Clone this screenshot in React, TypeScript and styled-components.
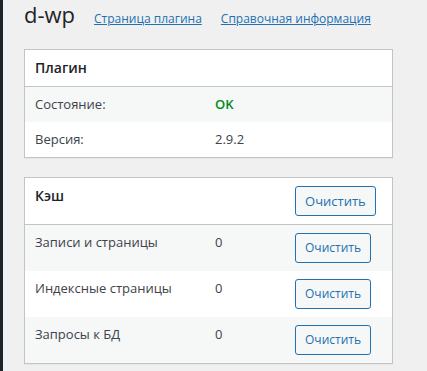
import styled, { createGlobalStyle } from 'styled-components';

const GlobalStyle = createGlobalStyle`
  html, body {
    margin: 0;
    padding: 0;
    background: #f0f0f1;
  }
  body {
    font-family: "Open Sans", "Noto Sans", sans-serif;
    font-size: 13px;
    color: #3c434a;
  }
`;

const Screen = styled.div`
  display: flex;
  min-height: 371px;
`;

const MenuEdge = styled.div`
  width: 3px;
  flex: none;
  background: #1d2327;
`;

const Wrap = styled.div`
  padding: 0 0 0 21px;
`;

const TitleBar = styled.div`
  display: flex;
  align-items: baseline;
  gap: 19px;
  height: 30px;
  margin-top: -1px;
  margin-bottom: 20px;
`;

const Title = styled.h1`
  margin: 0;
  font-size: 22px;
  font-weight: 400;
  line-height: 30px;
  color: #1d2327;
`;

const TopLink = styled.a`
  color: #2271b1;
  font-size: 12px;
  text-decoration: underline;
  cursor: pointer;
`;

const Table = styled.table`
  width: 369px;
  border: 1px solid #c3c4c7;
  border-spacing: 0;
  border-collapse: separate;
  background: #fff;
  box-shadow: 0 1px 1px rgba(0, 0, 0, 0.04);
  table-layout: fixed;
  margin-bottom: 19px;
`;

const HeadCell = styled.th`
  text-align: left;
  vertical-align: top;
  padding: 8px 10px;
  font-size: 14px;
  font-weight: 600;
  line-height: 20px;
  color: #1d2327;
  border-bottom: 1px solid #c3c4c7;
`;

const Row = styled.tr<{ $striped?: boolean }>`
  background: ${(p) => (p.$striped ? '#f6f7f7' : '#fff')};
`;

const Cell = styled.td<{ $ok?: boolean }>`
  vertical-align: top;
  padding: 8px 10px;
  font-size: 13px;
  line-height: 19px;
  color: ${(p) => (p.$ok ? '#008a20' : '#3c434a')};
  font-weight: ${(p) => (p.$ok ? 600 : 400)};
`;

const Button = styled.button<{ $large?: boolean }>`
  font-family: inherit;
  font-size: ${(p) => (p.$large ? '13px' : '12px')};
  line-height: 28px;
  min-height: 30px;
  padding: 0 9px;
  border: 1px solid #2271b1;
  border-radius: 3px;
  background: #f6f7f7;
  color: #2271b1;
  cursor: pointer;
  white-space: nowrap;
`;

const cacheRows = [
  { label: 'Записи и страницы', count: 0 },
  { label: 'Индексные страницы', count: 0 },
  { label: 'Запросы к БД', count: 0 },
];

export default function App() {
  return (
    <>
      <GlobalStyle />
      <Screen>
        <MenuEdge />
        <Wrap>
          <TitleBar>
            <Title>d-wp</Title>
            <TopLink>Страница плагина</TopLink>
            <TopLink>Справочная информация</TopLink>
          </TitleBar>

          <Table>
            <colgroup>
              <col style={{ width: 180 }} />
              <col />
            </colgroup>
            <thead>
              <tr>
                <HeadCell colSpan={2}>Плагин</HeadCell>
              </tr>
            </thead>
            <tbody>
              <Row $striped>
                <Cell>Состояние:</Cell>
                <Cell $ok>OK</Cell>
              </Row>
              <Row>
                <Cell>Версия:</Cell>
                <Cell>2.9.2</Cell>
              </Row>
            </tbody>
          </Table>

          <Table>
            <colgroup>
              <col style={{ width: 180 }} />
              <col style={{ width: 80 }} />
              <col />
            </colgroup>
            <thead>
              <tr>
                <HeadCell colSpan={2}>Кэш</HeadCell>
                <HeadCell>
                  <Button $large>Очистить</Button>
                </HeadCell>
              </tr>
            </thead>
            <tbody>
              {cacheRows.map((r, i) => (
                <Row key={r.label} $striped={i % 2 === 0}>
                  <Cell>{r.label}</Cell>
                  <Cell>{r.count}</Cell>
                  <Cell>
                    <Button>Очистить</Button>
                  </Cell>
                </Row>
              ))}
            </tbody>
          </Table>
        </Wrap>
      </Screen>
    </>
  );
}
